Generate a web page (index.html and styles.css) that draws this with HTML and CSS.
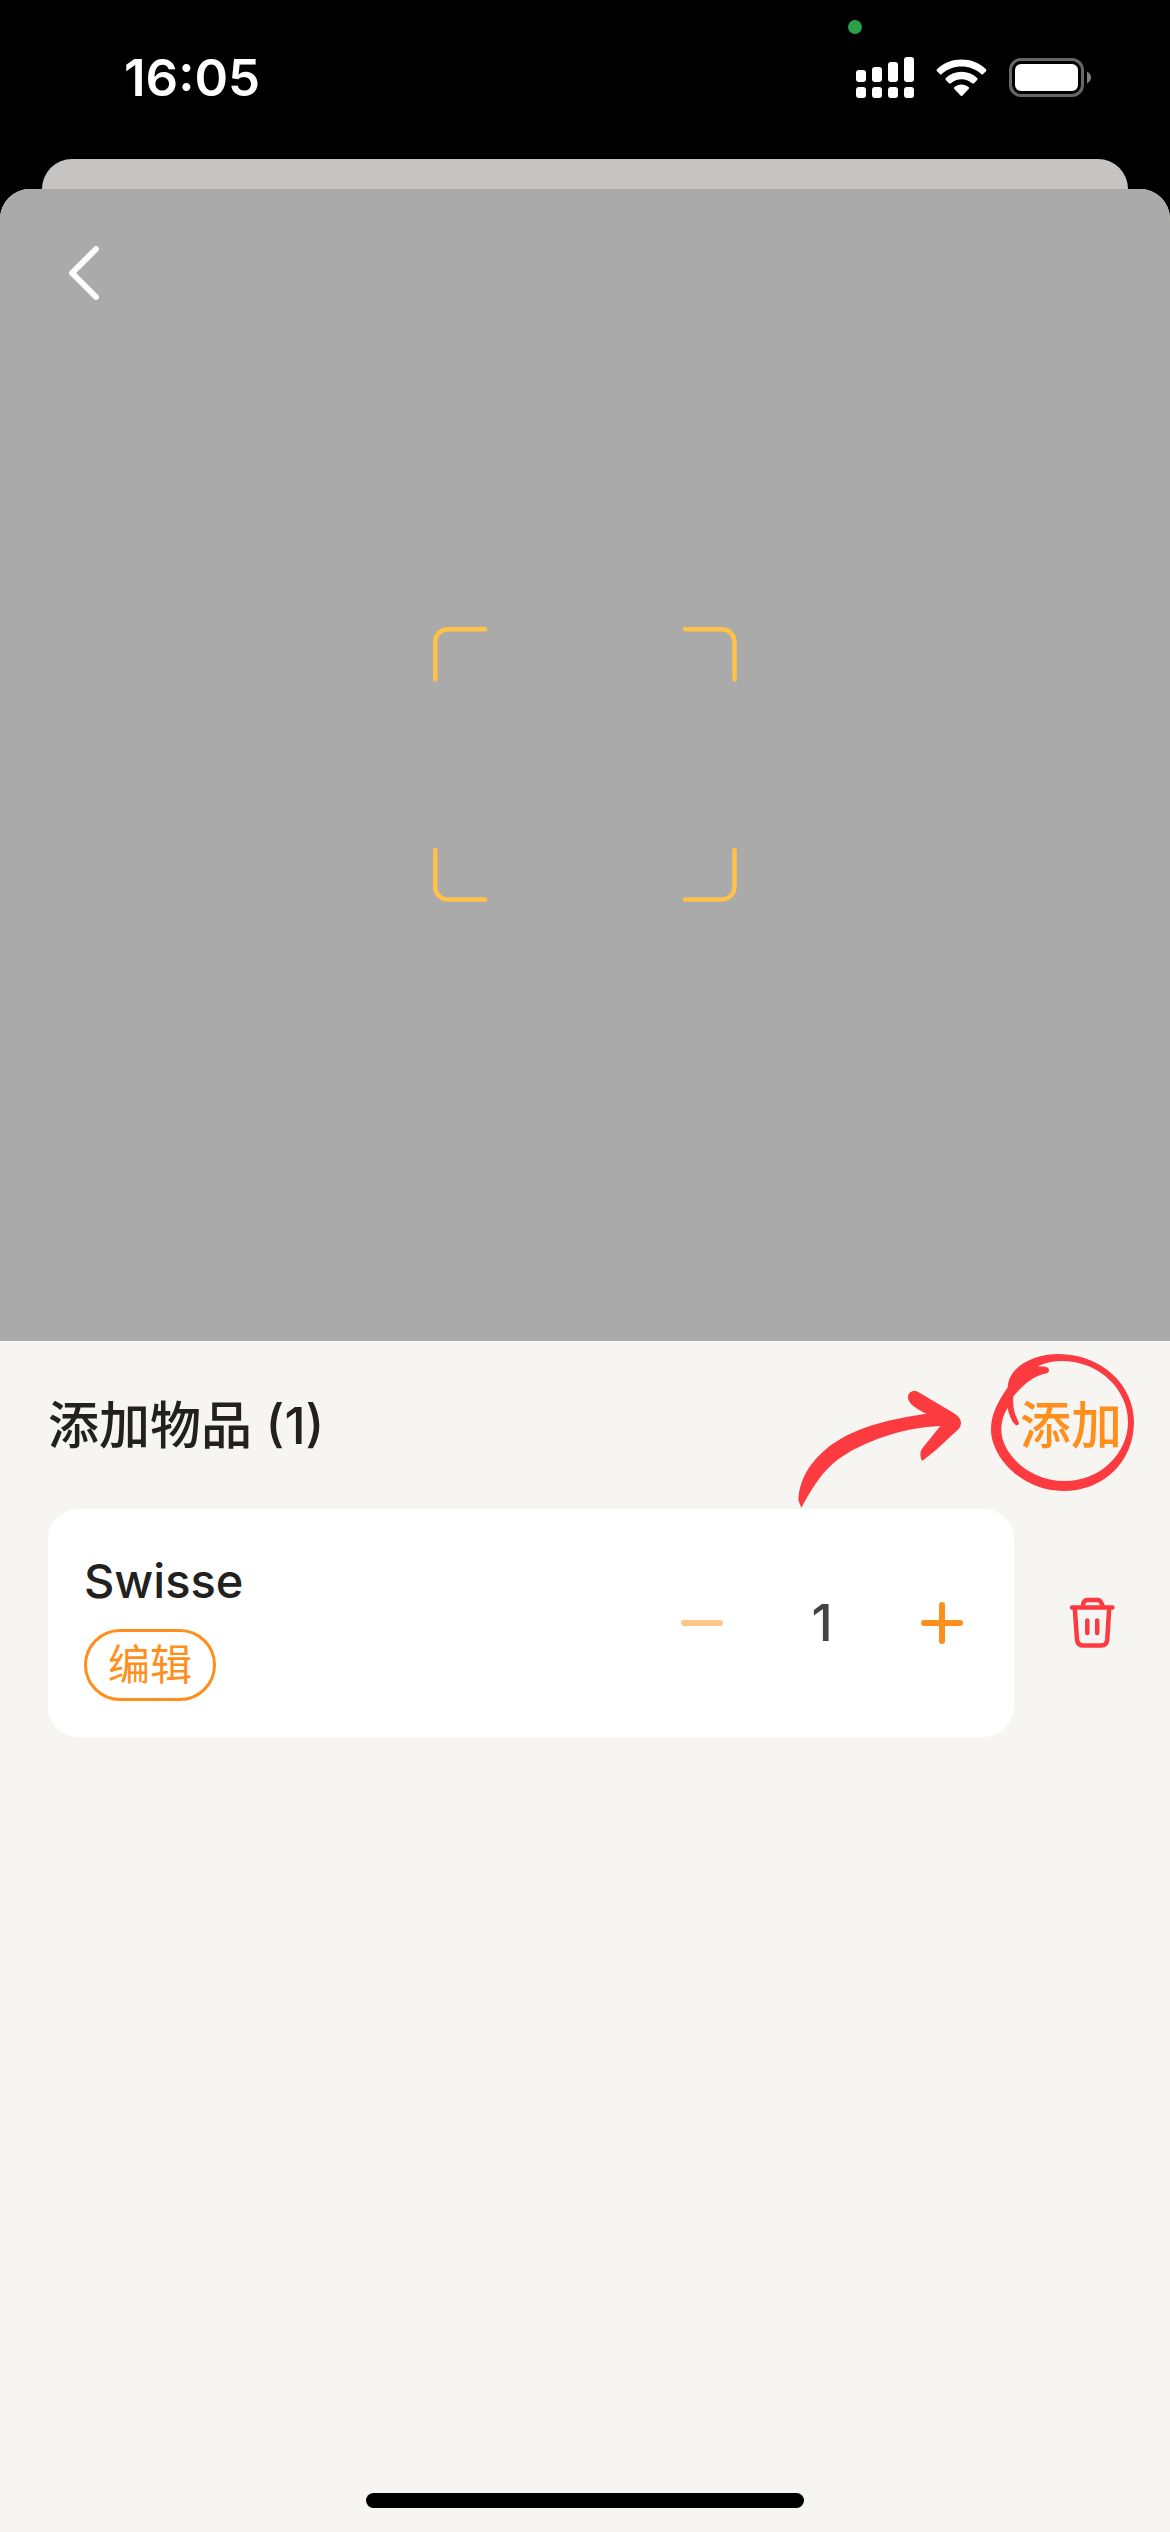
FILE: index.html
```html
<!DOCTYPE html>
<html lang="zh-CN">
<head>
<meta charset="utf-8">
<meta name="viewport" content="width=device-width, initial-scale=1">
<title>添加物品</title>
<link rel="stylesheet" href="styles.css">
</head>
<body>
<div class="screen">
  <header class="status-bar">
    <time class="clock">16:05</time>
    <div class="status-icons">
      <span class="camera-dot"></span>
      <svg class="signal" viewBox="0 0 58 42" aria-hidden="true">
        <rect x="0" y="14" width="10" height="12" rx="3"/>
        <rect x="16" y="11" width="10" height="15" rx="3"/>
        <rect x="32" y="6" width="10" height="20" rx="3"/>
        <rect x="48" y="1" width="10" height="25" rx="3"/>
        <rect x="0" y="31" width="10" height="11" rx="3"/>
        <rect x="16" y="31" width="10" height="11" rx="3"/>
        <rect x="32" y="31" width="10" height="11" rx="3"/>
        <rect x="48" y="31" width="10" height="11" rx="3"/>
      </svg>
      <svg class="wifi" viewBox="0 0 51 42" aria-hidden="true">
        <path d="M1 13.2C14 .2 37 .2 50 13.2Q51 14.2 50 15.2L47.200 18Q46.200 19 45.200 18C34.500 8 16.500 8 5.800 18Q4.800 19 3.800 18L1 15.200Q0 14.200 1 13.200Z"/>
        <path d="M9.800 22C18.500 13.500 32.500 13.500 41.200 22Q42 23 41.200 24L38 27.200Q37 28 36 27.200C30 22 21 22 15 27.200Q14 28 13 27.200L9.800 24Q9 23 9.800 22Z"/>
        <path d="M18.400 31C22.500 27.600 28.500 27.600 32.600 31Q33.500 32 32.700 33L26.500 39.500Q25.500 40.500 24.500 39.500L18.300 33Q17.500 32 18.400 31Z"/>
      </svg>
      <svg class="battery" viewBox="0 0 82 42" aria-hidden="true">
        <rect class="battery-shell" x="1.500" y="3.500" width="72" height="36" rx="10.500"/>
        <rect x="6" y="8" width="63" height="27" rx="6"/>
        <path class="battery-cap" d="M78 15.500Q82 18 82 21.500Q82 25 78 27.500Z"/>
      </svg>
    </div>
  </header>

  <div class="sheet-behind"></div>

  <main class="sheet">
    <section class="scanner">
      <button class="back" type="button" aria-label="返回">
        <svg viewBox="0 0 30 54" aria-hidden="true"><path d="M27 3L3 27L27 51"/></svg>
      </button>
      <svg class="viewfinder" viewBox="0 0 304 276" aria-hidden="true">
        <path d="M2.200 52.500V15A12.800 12.800 0 0 1 15 2.200H52"/>
        <path d="M252 2.200H289A12.800 12.800 0 0 1 301.500 15V52.500"/>
        <path d="M2.200 223V260A12.800 12.800 0 0 0 15 272.500H52"/>
        <path d="M252 272.500H289A12.800 12.800 0 0 0 301.500 260V223"/>
      </svg>
    </section>

    <section class="panel">
      <div class="panel-head">
        <h1 class="title">添加物品 (1)</h1>
        <button class="add" type="button">添加</button>
      </div>
      <svg class="hint" viewBox="60 60 1050 495" aria-hidden="true">
        <path d="M94 533L85 511C88 440 130 380 198 335C270 288 370 265 469 251C440 237 412 220 414 200C416 182 436 180 446 187L552 250C577 266 577 284 566 297C530 330 490 370 456 393C447 372 452 360 462 349L511 288C400 292 300 330 230 371C165 408 130 468 94 533Z"/>
        <path fill-rule="evenodd" d="M713 172C716 110 790 72 865 72C1000 72 1092 170 1092 275C1092 395 1000 483 880 483C750 483 663 375 663 300C663 250 685 215 713 172ZM803 109C825 98 850 93 880 93C990 95 1074 180 1074 275C1074 370 990 453 885 453C770 453 694 365 694 300C694 275 702 250 713 234C717 255 725 275 737 285C742 288 748 284 746 276C732 250 728 230 730 199C760 165 785 140 830 130C840 126 840 112 825 110C818 109 810 110 803 109Z"/>
      </svg>

      <ul class="items">
        <li class="item">
          <div class="card">
            <div class="info">
              <span class="name">Swisse</span>
              <button class="edit" type="button">编辑</button>
            </div>
            <div class="stepper">
              <button class="step" type="button" aria-label="减少" disabled>
                <svg viewBox="0 0 42 42" aria-hidden="true"><path d="M3 21H39"/></svg>
              </button>
              <output class="count">1</output>
              <button class="step" type="button" aria-label="增加">
                <svg viewBox="0 0 42 42" aria-hidden="true"><path d="M3 21H39M21 3V39"/></svg>
              </button>
            </div>
          </div>
          <button class="remove" type="button" aria-label="删除">
            <svg viewBox="0 0 72 72" aria-hidden="true">
              <path d="M16 20.500H56.500M27 19.500C27 15.500 28 13 31.500 13H42C45 13 45 15.500 47 19.500M18.800 21L21 53Q22 58.500 27.500 58.500H45Q50.500 58.500 51.200 53L53.200 21M31.300 33.500V46M41.200 33.500V46"/>
            </svg>
          </button>
        </li>
      </ul>

      <div class="home-indicator"></div>
    </section>
  </main>
</div>
</body>
</html>
```

FILE: styles.css
```css
* {
  box-sizing: border-box;
}

body {
  margin: 0;
  background: #000;
  color: #212120;
  font-family: Inter, "Noto Sans CJK SC", sans-serif;
}

button {
  margin: 0;
  padding: 0;
  border: 0;
  background: none;
  color: inherit;
  font: inherit;
}

svg {
  display: block;
}

.screen {
  display: flex;
  flex-direction: column;
  min-height: 100vh;
}

/* Status bar */
.status-bar {
  display: flex;
  align-items: center;
  justify-content: space-between;
  height: 159px;
  padding: 0 79px 5px 124px;
  color: #fff;
}

.clock {
  padding-top: 2px;
  font-size: 51px;
  font-weight: 600;
  line-height: 60px;
}

.status-icons {
  position: relative;
  display: flex;
  gap: 22px;
  fill: #fff;
}

.status-icons svg {
  height: 42px;
}

.camera-dot {
  position: absolute;
  top: -36px;
  left: -8px;
  width: 14px;
  height: 14px;
  border-radius: 50%;
  background: #2aa148;
}

.signal {
  width: 58px;
}

.wifi {
  width: 51px;
}

.battery {
  width: 82px;
}

.battery-shell {
  fill: none;
  stroke: #666;
  stroke-width: 3;
}

.battery-cap {
  fill: #808080;
}

/* Stacked sheets */
.sheet-behind {
  height: 60px;
  margin: 0 42px -30px;
  border-radius: 30px 30px 0 0;
  background: #c5c4c2;
}

.sheet {
  position: relative;
  display: flex;
  flex: 1;
  flex-direction: column;
  overflow: hidden;
  border-radius: 30px 30px 0 0;
  background: #f6f5f1;
}

/* Scanner */
.scanner {
  position: relative;
  display: flex;
  align-items: center;
  justify-content: center;
  aspect-ratio: 65 / 64;
  background: #aaa;
}

.back {
  position: absolute;
  top: 57px;
  left: 69px;
}

.back svg {
  width: 30px;
  height: 54px;
  fill: none;
  stroke: #fcfcfc;
  stroke-width: 6;
  stroke-linecap: round;
  stroke-linejoin: round;
}

.viewfinder {
  width: 304px;
  height: 276px;
  fill: none;
  stroke: #ffc148;
  stroke-width: 4.5;
  stroke-linecap: round;
}

/* Items panel */
.panel {
  position: relative;
  display: flex;
  flex: 1;
  flex-direction: column;
  padding-bottom: 24px;
}

.panel-head {
  display: flex;
  align-items: center;
  justify-content: space-between;
  height: 168px;
  padding: 2px 48px 0;
}

.title,
.add {
  margin: 0;
  font-size: 51px;
  font-weight: 500;
  line-height: 72px;
}

.add {
  color: #ff8f1c;
}

.hint {
  position: absolute;
  top: 9px;
  right: 30px;
  width: 350px;
  height: 165px;
  fill: #fc3b40;
  pointer-events: none;
}

.items {
  margin: 0;
  padding: 0 42px 0 48px;
  list-style: none;
}

.item {
  display: flex;
  align-items: center;
  gap: 42px;
}

.card {
  display: flex;
  flex: 1;
  align-items: center;
  justify-content: space-between;
  padding: 36px 51px 36px 36px;
  border-radius: 30px;
  background: #fff;
}

.info {
  display: flex;
  flex-direction: column;
  align-items: flex-start;
  gap: 12px;
}

.name {
  font-size: 47px;
  font-weight: 500;
  line-height: 72px;
}

.edit {
  height: 72px;
  padding: 0 21px;
  border: 3px solid #ff8f1c;
  border-radius: 36px;
  color: #ff8f1c;
  font-size: 42px;
  line-height: 66px;
}

.stepper {
  display: flex;
  align-items: center;
}

.step svg {
  width: 42px;
  height: 42px;
  fill: none;
  stroke: #ff8f1c;
  stroke-width: 6;
  stroke-linecap: round;
}

.step:disabled {
  opacity: 0.5;
}

.count {
  width: 198px;
  color: #444;
  font-size: 51px;
  font-weight: 500;
  line-height: 72px;
  text-align: center;
}

.remove svg {
  width: 72px;
  height: 72px;
  fill: none;
  stroke: #fc3b40;
  stroke-width: 4.5;
  stroke-linecap: round;
}

.home-indicator {
  width: 438px;
  max-width: 60%;
  height: 15px;
  margin: auto auto 0;
  border-radius: 8px;
  background: #000;
}
```
